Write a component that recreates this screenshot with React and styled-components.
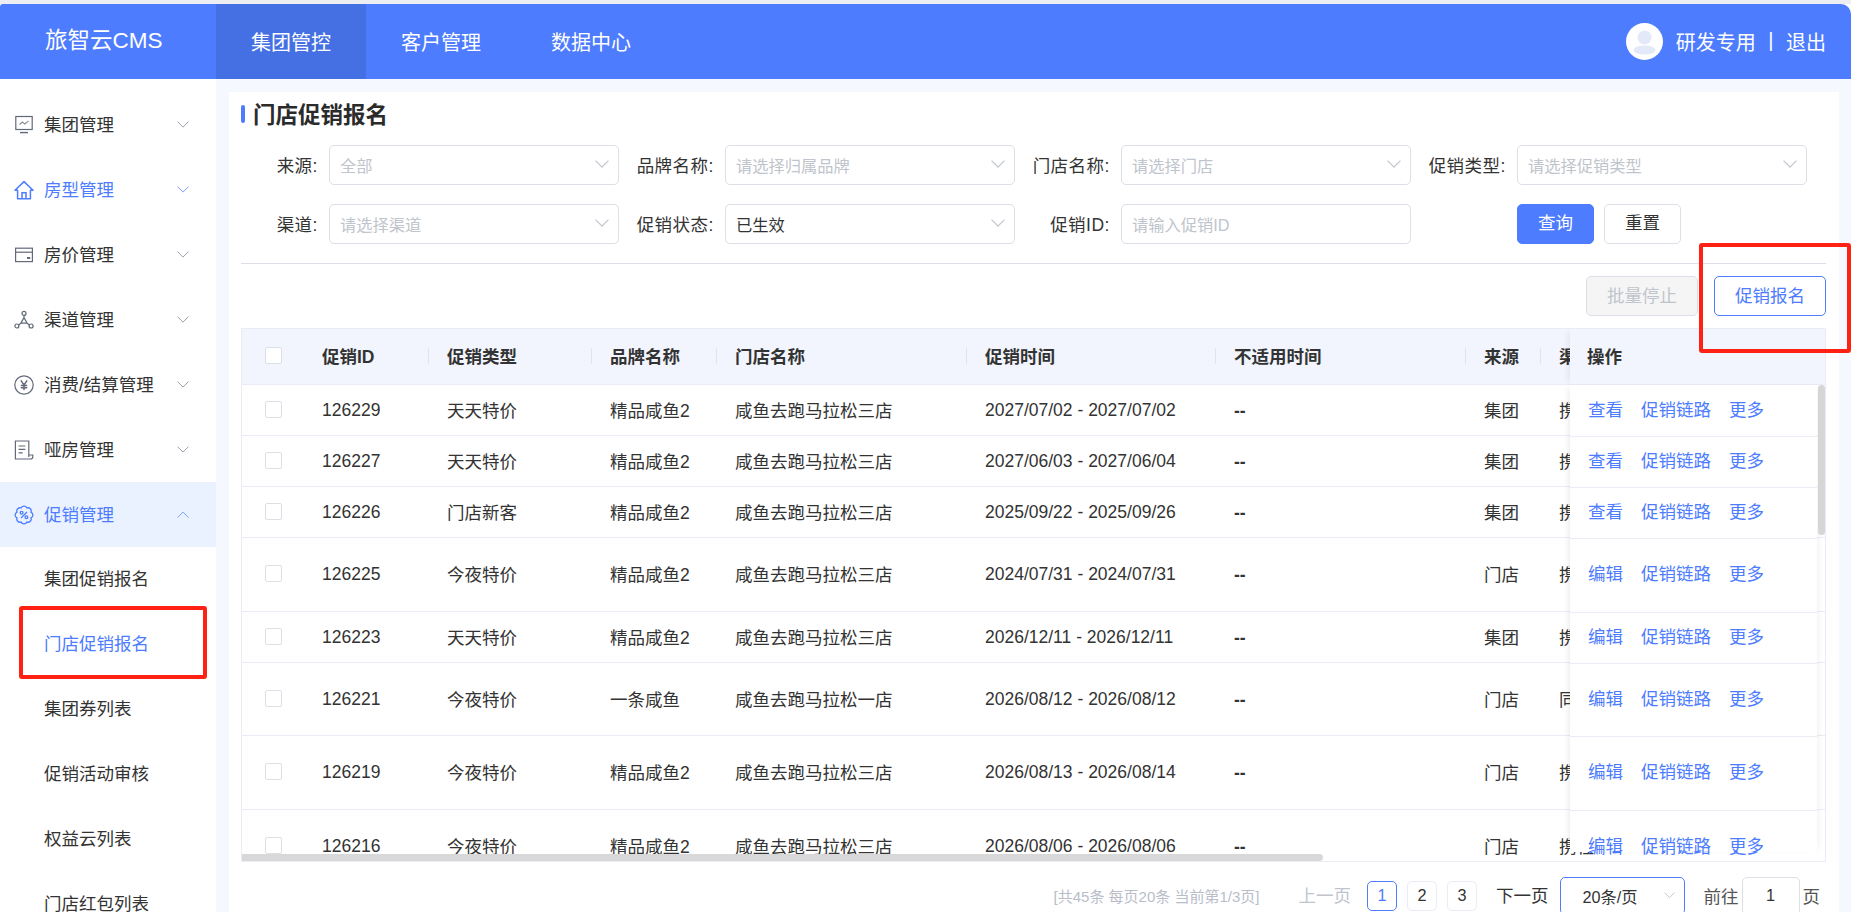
import React from 'react';
import styled, { createGlobalStyle } from 'styled-components';

const blue = '#4d7cfe';
const line = '#e9ebf5';
const text = '#333';

const GlobalStyle = createGlobalStyle`
  html, body {
    margin: 0;
    height: 100%;
    overflow: hidden;
    background: #fff;
  }
  body {
    font-family: "Liberation Sans", "Noto Sans CJK SC", sans-serif;
    font-size: 17.5px;
    color: ${text};
  }
  * {
    box-sizing: border-box;
  }
`;

const Chevron = ({ size = 12, up, color = '#9aa0ad' }) => (
  <svg width={size} height={size * 0.6} viewBox="0 0 12 7" fill="none" stroke={color} strokeWidth="1">
    <polyline points={up ? '0.5,6.5 6,1 11.5,6.5' : '0.5,0.5 6,6 11.5,0.5'} />
  </svg>
);

const iconProps = {
  width: 20,
  height: 20,
  viewBox: '0 0 20 20',
  fill: 'none',
  stroke: 'currentColor',
  strokeWidth: 1.2,
};

const MonitorIcon = () => (
  <svg {...iconProps}>
    <rect x="1.8" y="1.5" width="16.4" height="13" />
    <path d="M6 17.6h8" strokeWidth="1.4" />
    <path d="M5.5 9.5l2.8-2.4 2.6 1.8 3.6-3" stroke="#8a8f9b" />
  </svg>
);

const HouseIcon = () => (
  <svg {...iconProps} strokeWidth="1.5">
    <path d="M1 10.2L10 1.6l9 8.6h-2.6v8.6H3.6v-8.6z" strokeLinejoin="round" />
    <path d="M8 18.8v-6h4v6" />
  </svg>
);

const CardIcon = () => (
  <svg {...iconProps}>
    <rect x="1.6" y="3.2" width="16.8" height="13.4" />
    <path d="M1.6 7.2h16.8" />
    <rect x="13" y="12" width="3.2" height="2" fill="currentColor" stroke="none" />
  </svg>
);

const HubIcon = () => (
  <svg {...iconProps}>
    <circle cx="10" cy="3.4" r="2" />
    <circle cx="2.9" cy="16" r="2" />
    <circle cx="17.1" cy="16" r="2" />
    <path d="M10 5.4v2.2M7.6 12.8l-3 2.1M12.4 12.8l3 2.1M10 7.6l-3.2 5.6h6.4z" />
  </svg>
);

const YenIcon = () => (
  <svg {...iconProps}>
    <circle cx="10" cy="10" r="9.2" />
    <path d="M6.8 5.4L10 10l3.2-4.6M10 10v5M6.8 10.4h6.4M6.8 12.8h6.4" strokeWidth="1.5" />
  </svg>
);

const DocIcon = () => (
  <svg {...iconProps}>
    <path d="M14.8 15V1H1.4v18h15.2a2.2 2.2 0 0 0 2.2-2.2V15h-4v2" />
    <path d="M4.6 6h6.8M4.6 9.4h6.8M4.6 12.8h4" />
  </svg>
);

const PromoIcon = () => (
  <svg {...iconProps} strokeWidth="1.3">
    <path d="M17.02 7.09A3.2 3.2 0 0 1 17.02 12.91A3.2 3.2 0 0 1 12.91 17.02A3.2 3.2 0 0 1 7.09 17.02A3.2 3.2 0 0 1 2.98 12.91A3.2 3.2 0 0 1 2.98 7.09A3.2 3.2 0 0 1 7.09 2.98A3.2 3.2 0 0 1 12.91 2.98A3.2 3.2 0 0 1 17.02 7.09Z" />
    <circle cx="7.6" cy="7.8" r="1.4" />
    <circle cx="12.4" cy="12.2" r="1.4" />
    <path d="M13 7l-6 6" />
  </svg>
);

const menus = [
  { label: '集团管理', icon: <MonitorIcon /> },
  { label: '房型管理', icon: <HouseIcon />, tinted: true },
  { label: '房价管理', icon: <CardIcon /> },
  { label: '渠道管理', icon: <HubIcon /> },
  { label: '消费/结算管理', icon: <YenIcon /> },
  { label: '哑房管理', icon: <DocIcon /> },
  { label: '促销管理', icon: <PromoIcon />, tinted: true, open: true },
];

const subMenus = ['集团促销报名', '门店促销报名', '集团券列表', '促销活动审核', '权益云列表', '门店红包列表'];

const store3 = '咸鱼去跑马拉松三店';

const rows = [
  { id: '126229', type: '天天特价', brand: '精品咸鱼2', store: store3, time: '2027/07/02 - 2027/07/02', from: '集团', channel: '携程', action: '查看', h: 51 },
  { id: '126227', type: '天天特价', brand: '精品咸鱼2', store: store3, time: '2027/06/03 - 2027/06/04', from: '集团', channel: '携程', action: '查看', h: 51 },
  { id: '126226', type: '门店新客', brand: '精品咸鱼2', store: store3, time: '2025/09/22 - 2025/09/26', from: '集团', channel: '携程', action: '查看', h: 51 },
  { id: '126225', type: '今夜特价', brand: '精品咸鱼2', store: store3, time: '2024/07/31 - 2024/07/31', from: '门店', channel: '携程', action: '编辑', h: 74 },
  { id: '126223', type: '天天特价', brand: '精品咸鱼2', store: store3, time: '2026/12/11 - 2026/12/11', from: '集团', channel: '携程', action: '编辑', h: 51 },
  { id: '126221', type: '今夜特价', brand: '一条咸鱼', store: '咸鱼去跑马拉松一店', time: '2026/08/12 - 2026/08/12', from: '门店', channel: '同程', action: '编辑', h: 73 },
  { id: '126219', type: '今夜特价', brand: '精品咸鱼2', store: store3, time: '2026/08/13 - 2026/08/14', from: '门店', channel: '携程', action: '编辑', h: 74 },
  { id: '126216', type: '今夜特价', brand: '精品咸鱼2', store: store3, time: '2026/08/06 - 2026/08/06', from: '门店', channel: '携程', action: '编辑', h: 74 },
];

const Actions = ({ name }) => (
  <>
    <ActionLink>{name}</ActionLink>
    <ActionLink>促销链路</ActionLink>
    <ActionLink>更多</ActionLink>
  </>
);

const Field = ({ label, value, placeholder, arrow = true }) => (
  <FieldWrap>
    <FieldLabel>{label}</FieldLabel>
    <SelectBox>
      <SelectText $muted={!value}>{value || placeholder}</SelectText>
      {arrow && <Chevron size={14} color="#c0c4cc" />}
    </SelectBox>
  </FieldWrap>
);

const App = () => {
  return (
    <Page>
      <GlobalStyle />
      <TopStrip />
      <Header>
        <Logo>旅智云CMS</Logo>
        <NavTab $active>集团管控</NavTab>
        <NavTab>客户管理</NavTab>
        <NavTab>数据中心</NavTab>
        <UserArea>
          <Avatar>
            <svg width="37" height="37" viewBox="0 0 37 37">
              <circle cx="18.5" cy="14.5" r="7" fill="#e4e9fa" />
              <ellipse cx="18.5" cy="27" rx="11" ry="4.5" fill="#e4e9fa" />
            </svg>
          </Avatar>
          <UserText>研发专用</UserText>
          <UserDivider>|</UserDivider>
          <UserText>退出</UserText>
        </UserArea>
      </Header>
      <Body>
        <Sidebar>
          {menus.map((m) => (
            <MenuItem key={m.label} $tinted={m.tinted} $open={m.open}>
              <MenuIcon $tinted={m.tinted}>{m.icon}</MenuIcon>
              <MenuLabel>{m.label}</MenuLabel>
              <Chevron up={m.open} color={m.tinted ? '#7d9ffb' : '#9aa0ad'} />
            </MenuItem>
          ))}
          {subMenus.map((s) => (
            <SubItem key={s} $active={s === '门店促销报名'}>{s}</SubItem>
          ))}
        </Sidebar>
        <Main>
          <Panel>
            <Title><span>门店促销报名</span></Title>
            <Filters>
              <Field label="来源:" placeholder="全部" />
              <Field label="品牌名称:" placeholder="请选择归属品牌" />
              <Field label="门店名称:" placeholder="请选择门店" />
              <Field label="促销类型:" placeholder="请选择促销类型" />
              <Field label="渠道:" placeholder="请选择渠道" />
              <Field label="促销状态:" value="已生效" />
              <Field label="促销ID:" placeholder="请输入促销ID" arrow={false} />
              <FieldButtons>
                <Button $primary>查询</Button>
                <Button>重置</Button>
              </FieldButtons>
            </Filters>
            <Divider />
            <Toolbar>
              <ToolButton $disabled>批量停止</ToolButton>
              <ToolButton>促销报名</ToolButton>
            </Toolbar>
            <TableWrap>
              <HeadRow>
                <Cell $first><CheckBox /></Cell>
                <HeadCell>促销ID</HeadCell>
                <HeadCell>促销类型</HeadCell>
                <HeadCell>品牌名称</HeadCell>
                <HeadCell>门店名称</HeadCell>
                <HeadCell>促销时间</HeadCell>
                <HeadCell>不适用时间</HeadCell>
                <HeadCell>来源</HeadCell>
                <ClipCell>渠道</ClipCell>
              </HeadRow>
              {rows.map((r, i) => {
                // only the last row shows under the fixed column, the rest stays clipped
                const last = i === rows.length - 1;
                return (
                  <Row key={r.id} $h={r.h}>
                    <Cell $first><CheckBox /></Cell>
                    <NumCell>{r.id}</NumCell>
                    <Cell>{r.type}</Cell>
                    <Cell>{r.brand}</Cell>
                    <Cell>{r.store}</Cell>
                    <NumCell>{r.time}</NumCell>
                    <DashCell>--</DashCell>
                    <Cell>{r.from}</Cell>
                    {last ? <Cell>{r.channel}</Cell> : <ClipCell>{r.channel}</ClipCell>}
                    {last && <Cell><Actions name={r.action} /></Cell>}
                  </Row>
                );
              })}
              <FixedColumn>
                <FixedHead>操作</FixedHead>
                <FixedBody>
                  {rows.map((r) => (
                    <FixedRow key={r.id} $h={r.h}>
                      <Actions name={r.action} />
                    </FixedRow>
                  ))}
                </FixedBody>
              </FixedColumn>
              <VerticalThumb />
              <HorizontalThumb />
            </TableWrap>
            <Pagination>
              <Summary>[共45条 每页20条 当前第1/3页]</Summary>
              <PageLabel $muted>上一页</PageLabel>
              <Pages>
                <PageNum $active>1</PageNum>
                <PageNum>2</PageNum>
                <PageNum>3</PageNum>
              </Pages>
              <PageLabel>下一页</PageLabel>
              <SizeSelect>
                20条/页
                <Chevron size={11} color="#c0c4cc" />
              </SizeSelect>
              <GoTo>
                前往
                <GoInput>1</GoInput>
                页
              </GoTo>
            </Pagination>
          </Panel>
        </Main>
      </Body>
      <SideMark />
      <ButtonMark />
    </Page>
  );
};

export default App;

const Page = styled.div`
  position: relative;
  width: 1851px;
  height: 912px;
  overflow: hidden;
  display: flex;
  flex-direction: column;
`;

const TopStrip = styled.div`
  flex: none;
  height: 4px;
  background: #eceef1;
`;

const Header = styled.header`
  flex: none;
  height: 75px;
  display: flex;
  align-items: stretch;
  background: ${blue};
  color: #fff;
  border-top-right-radius: 10px;
  border-top-left-radius: 3px;
`;

const Logo = styled.div`
  width: 216px;
  padding-left: 45px;
  font-size: 22.5px;
  line-height: 73px;
`;

const NavTab = styled.div`
  width: 150px;
  text-align: center;
  font-size: 20px;
  line-height: 78px;
  background: ${(p) => (p.$active ? '#4570e4' : 'transparent')};
`;

const UserArea = styled.div`
  margin-left: auto;
  padding-right: 25px;
  display: flex;
  align-items: center;
  font-size: 20px;
`;

const Avatar = styled.div`
  width: 37px;
  height: 37px;
  margin-right: 13px;
  border-radius: 50%;
  background: #fff;
  overflow: hidden;
  svg {
    display: block;
  }
`;

const UserText = styled.span`
  padding-bottom: 1px;
`;

const UserDivider = styled.span`
  margin: 0 12.5px;
  padding-bottom: 3px;
  font-size: 20px;
`;

const Body = styled.div`
  flex: 1;
  min-height: 0;
  display: flex;
`;

const Sidebar = styled.aside`
  flex: none;
  width: 216px;
  padding-top: 13px;
  background: #fff;
  overflow: hidden;
`;

const MenuItem = styled.div`
  height: 65px;
  padding: 0 27px 0 14px;
  display: flex;
  align-items: center;
  color: ${(p) => (p.$tinted ? blue : text)};
  background: ${(p) => (p.$open ? '#ebf2ff' : 'transparent')};
`;

const MenuIcon = styled.span`
  width: 20px;
  height: 20px;
  margin-right: 10px;
  display: flex;
  color: ${(p) => (p.$tinted ? blue : '#626978')};
  svg {
    display: block;
  }
`;

const MenuLabel = styled.span`
  flex: 1;
  padding-bottom: 2px;
  white-space: nowrap;
`;

const SubItem = styled.div`
  height: 65px;
  line-height: 65px;
  padding-left: 44px;
  color: ${(p) => (p.$active ? blue : text)};
`;

const Main = styled.main`
  flex: 1;
  min-width: 0;
  padding: 13px 12px 0 13px;
  background: #f5f8ff;
`;

const Panel = styled.section`
  height: 100%;
  padding: 0 13px 0 12px;
  background: #fff;
`;

const Title = styled.h1`
  margin: 0;
  height: 44px;
  display: flex;
  align-items: center;
  font-size: 22.5px;
  font-weight: 700;
  color: #2b2b2b;
  span {
    padding-bottom: 3px;
  }
  &::before {
    content: '';
    width: 4px;
    height: 18px;
    margin-right: 8px;
    border-radius: 2px;
    background: ${blue};
  }
`;

const Filters = styled.div`
  margin-top: 9px;
  display: grid;
  grid-template-columns: repeat(4, 378px);
  column-gap: 18px;
  row-gap: 19px;
`;

const FieldWrap = styled.div`
  display: grid;
  grid-template-columns: 77px 290px;
  column-gap: 11px;
  align-items: center;
`;

const FieldLabel = styled.label`
  justify-self: end;
  padding-bottom: 2px;
  letter-spacing: 0.5px;
  white-space: nowrap;
`;

const SelectBox = styled.div`
  height: 40px;
  padding: 0 9px 1px 10px;
  display: flex;
  align-items: center;
  justify-content: space-between;
  border: 1px solid #dcdfe6;
  border-radius: 5px;
  font-size: 16.25px;
`;

const SelectText = styled.span`
  color: ${(p) => (p.$muted ? '#c0c4cc' : text)};
`;

const FieldButtons = styled.div`
  padding-left: 88px;
  display: flex;
  gap: 10px;
`;

const Button = styled.button`
  width: 77px;
  height: 40px;
  padding: 0 0 6px;
  font: inherit;
  border-radius: 5px;
  border: 1px solid ${(p) => (p.$primary ? blue : '#dcdfe6')};
  background: ${(p) => (p.$primary ? blue : '#fff')};
  color: ${(p) => (p.$primary ? '#fff' : text)};
`;

const Divider = styled.div`
  height: 1px;
  margin-top: 19px;
  background: #dcdfe6;
`;

const Toolbar = styled.div`
  margin-top: 12px;
  display: flex;
  justify-content: flex-end;
  gap: 16px;
`;

const ToolButton = styled.button`
  width: 112px;
  height: 40px;
  padding: 0 0 4px;
  font: inherit;
  border-radius: 5px;
  border: 1px solid ${(p) => (p.$disabled ? '#dcdfe6' : blue)};
  background: ${(p) => (p.$disabled ? '#f5f5f5' : '#fff')};
  color: ${(p) => (p.$disabled ? '#c0c4cc' : blue)};
`;

const TableWrap = styled.div`
  position: relative;
  margin-top: 12px;
  height: 534px;
  border: 1px solid ${line};
  overflow: hidden;
`;

const columns = '62px 125px 163px 125px 250px 249px 250px 75px 29px 300px';

const HeadRow = styled.div`
  height: 56px;
  padding-bottom: 3px;
  display: grid;
  grid-template-columns: ${columns};
  align-items: center;
  background: #f2f5fd;
  border-bottom: 1px solid ${line};
  font-weight: 700;
  white-space: nowrap;
`;

const Row = styled.div`
  height: ${(p) => p.$h}px;
  padding-bottom: 2px;
  display: grid;
  grid-template-columns: ${columns};
  align-items: center;
  border-bottom: 1px solid ${line};
  white-space: nowrap;
`;

const Cell = styled.div`
  padding-left: ${(p) => (p.$first ? '23px' : '18px')};
  display: flex;
  align-items: center;
`;

const NumCell = styled(Cell)`
  padding-top: 2px;
`;

const DashCell = styled(Cell)`
  padding-top: 4px;
  font-weight: 700;
`;

const ClipCell = styled(Cell)`
  overflow: hidden;
`;

const HeadCell = styled(Cell)`
  position: relative;
  &::after {
    content: '';
    position: absolute;
    right: 0;
    top: 50%;
    width: 1px;
    height: 16px;
    margin-top: -7px;
    background: #e1e4ef;
  }
`;

const CheckBox = styled.span`
  width: 17px;
  height: 17px;
  border: 1px solid #dcdfe6;
  border-radius: 2px;
  background: #fff;
`;

const ActionLink = styled.a`
  margin-right: 18px;
  color: ${blue};
`;

const FixedColumn = styled.div`
  position: absolute;
  top: 0;
  right: 0;
  width: 255px;
`;

const FixedHead = styled.div`
  height: 56px;
  padding: 0 0 3px 17px;
  display: flex;
  align-items: center;
  font-weight: 700;
  background: #f2f5fd;
  border-bottom: 1px solid ${line};
  box-shadow: -5px 0 6px -3px rgba(0, 0, 0, 0.07);
`;

const FixedBody = styled.div`
  width: 247px;
  height: 467px;
  padding-top: 1px;
  overflow: hidden;
  background: #fff;
  box-shadow: -5px 0 6px -3px rgba(0, 0, 0, 0.07), 5px 0 6px -3px rgba(0, 0, 0, 0.05);
`;

const FixedRow = styled.div`
  height: ${(p) => p.$h}px;
  padding: 0 0 6px 18px;
  display: flex;
  align-items: center;
  white-space: nowrap;
  border-bottom: 1px solid ${line};
`;

const VerticalThumb = styled.div`
  position: absolute;
  top: 56px;
  right: 0;
  width: 7px;
  height: 150px;
  border-radius: 4px;
  background: #d6d6d6;
`;

const HorizontalThumb = styled.div`
  position: absolute;
  left: 0;
  bottom: 0;
  width: 1081px;
  height: 7px;
  border-radius: 0 4px 4px 0;
  background: #d8d8d8;
`;

const Pagination = styled.div`
  height: 37.5px;
  margin-top: 15px;
  padding-right: 6px;
  display: flex;
  align-items: center;
  justify-content: flex-end;
  white-space: nowrap;
`;

const Summary = styled.span`
  margin-right: 39px;
  font-size: 15px;
  color: #b8bdc9;
`;

const PageLabel = styled.span`
  padding-bottom: 2px;
  color: ${(p) => (p.$muted ? '#c0c4cc' : text)};
`;

const Pages = styled.div`
  margin: 0 19px 0 16px;
  display: flex;
  gap: 10px;
`;

const PageNum = styled.span`
  width: 30px;
  height: 30px;
  display: flex;
  align-items: center;
  justify-content: center;
  font-size: 16.25px;
  border: 1px solid ${(p) => (p.$active ? blue : line)};
  border-radius: 5px;
  color: ${(p) => (p.$active ? blue : text)};
`;

const SizeSelect = styled.div`
  width: 125px;
  height: 37.5px;
  margin-left: 11px;
  padding: 0 9px 0 22px;
  display: flex;
  align-items: center;
  justify-content: space-between;
  font-size: 16.25px;
  border: 1px solid ${blue};
  border-radius: 5px;
`;

const GoTo = styled.div`
  margin-left: 19px;
  display: flex;
  align-items: center;
  gap: 3px;
  color: #555;
`;

const GoInput = styled.span`
  width: 58px;
  height: 37.5px;
  display: flex;
  align-items: center;
  justify-content: center;
  font-size: 16.25px;
  color: ${text};
  border: 1px solid #dcdfe6;
  border-radius: 5px;
`;

const SideMark = styled.div`
  position: absolute;
  left: 19px;
  top: 606px;
  width: 188px;
  height: 73px;
  border: 4px solid #ff2114;
  border-radius: 3px;
`;

const ButtonMark = styled.div`
  position: absolute;
  left: 1699px;
  top: 243px;
  width: 152px;
  height: 110px;
  border: 4px solid #ff2114;
  border-radius: 3px;
`;
